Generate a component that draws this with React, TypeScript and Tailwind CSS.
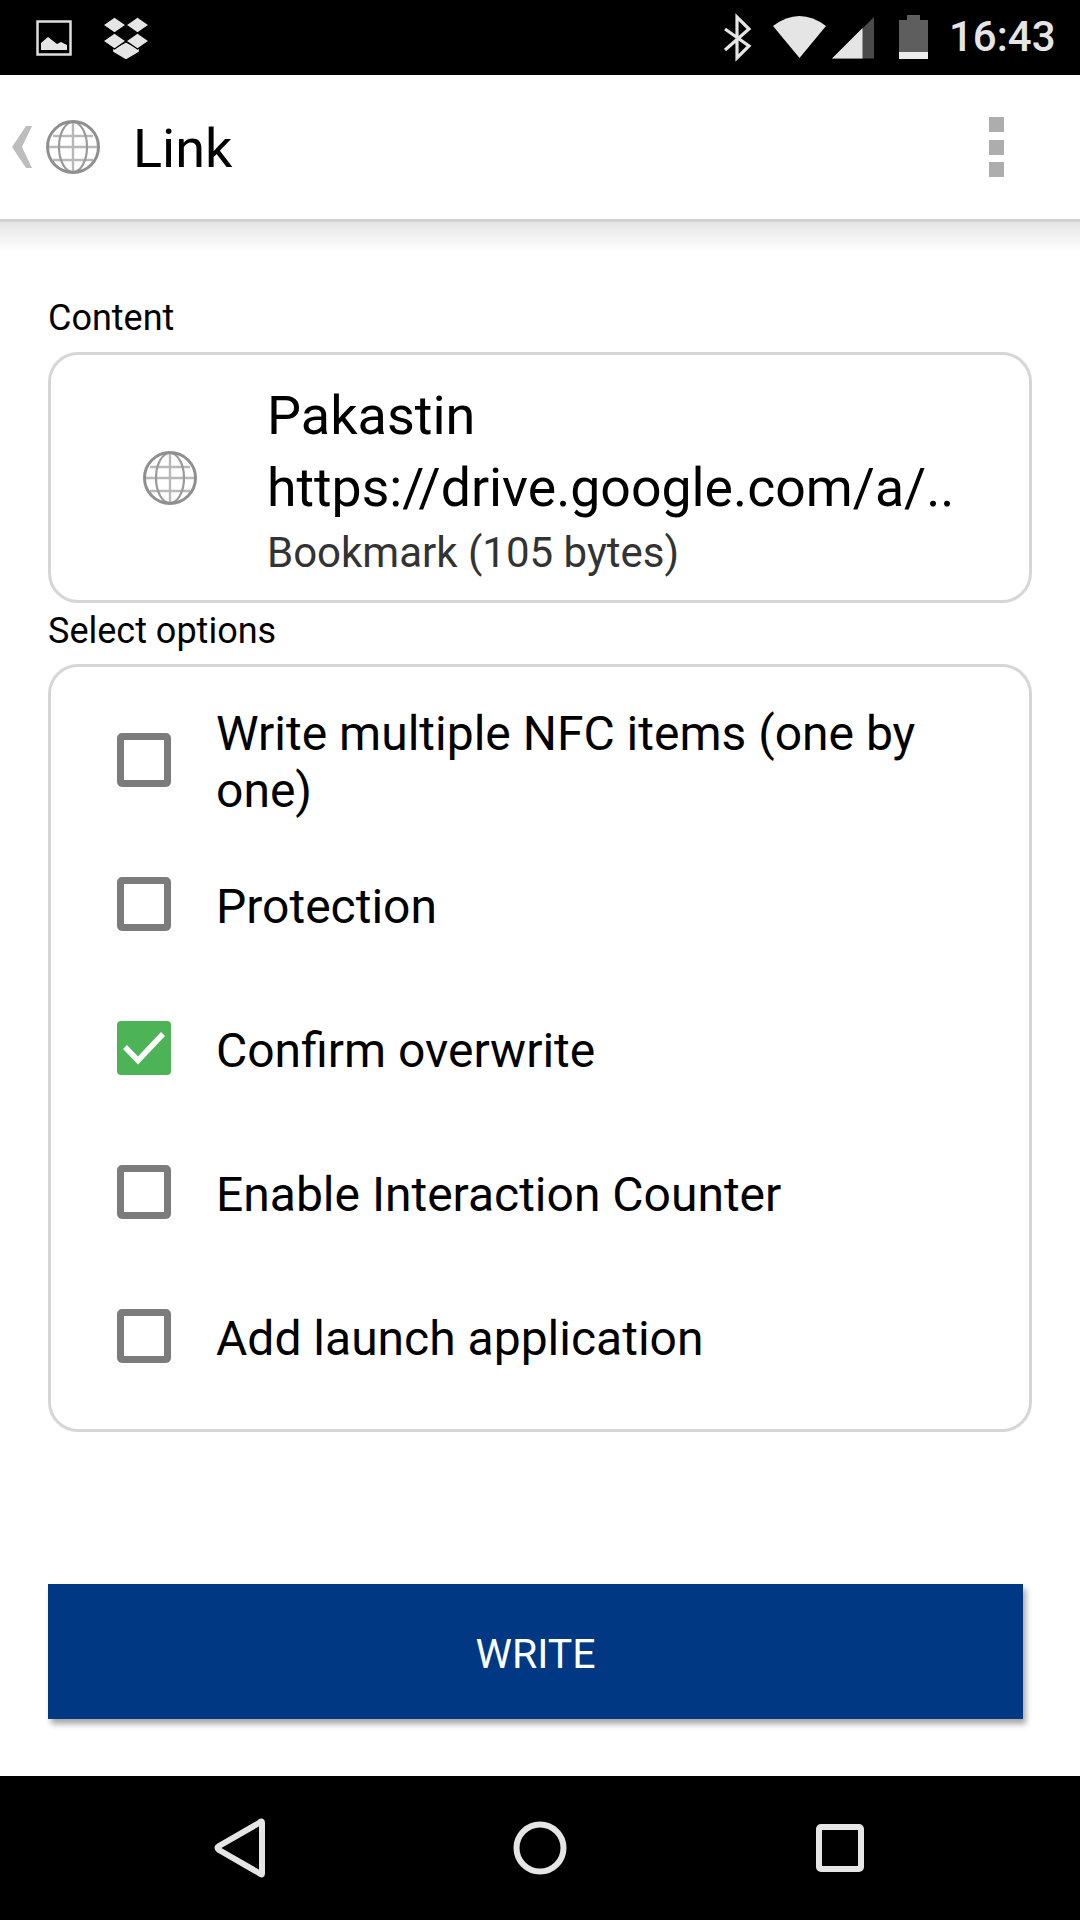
import React from "react";

function Globe({ size }: { size: number }) {
  return (
    <svg width={size} height={size} viewBox="0 0 54 54" fill="none" className="shrink-0">
      <g stroke="#b8b8b8" strokeWidth="2.4">
        <line x1="3" y1="27" x2="51" y2="27" />
        <line x1="27" y1="3" x2="27" y2="51" />
        <path d="M7 16 H47" />
        <path d="M7 40 H47" />
      </g>
      <g stroke="#9a9a9a" strokeWidth="2.2">
        <ellipse cx="27" cy="27" rx="14" ry="25" />
      </g>
      <circle cx="27" cy="27" r="25.500" stroke="#8f8f8f" strokeWidth="3" />
    </svg>
  );
}

function Check({ checked }: { checked?: boolean }) {
  if (checked) {
    return (
      <div className="w-[54px] h-[54px] rounded-[4px] bg-[#4cb457] shrink-0 flex items-center justify-center">
        <svg width="54" height="54" viewBox="0 0 54 54" fill="none">
          <path d="M8 26 L21 39.500 L46 13" stroke="#ffffff" strokeWidth="5.500" />
        </svg>
      </div>
    );
  }
  return <div className="w-[54px] h-[54px] rounded-[5px] border-[7px] border-[#7c7c7c] shrink-0" />;
}

function Option({ label, checked }: { label: React.ReactNode; checked?: boolean }) {
  return (
    <div className="h-[144px] flex items-center pl-[66px] pr-[60px] gap-[45px]">
      <Check checked={checked} />
      <div className="pt-[4px] text-[48px] leading-[57px] text-black">{label}</div>
    </div>
  );
}

export default function App() {
  return (
    <div className="w-[1080px] h-[1920px] flex flex-col bg-white overflow-hidden font-['Roboto',sans-serif]">
      <div className="h-[75px] bg-black flex items-center shrink-0">
        <svg width="1080" height="75" viewBox="0 0 1080 75" className="block">
          <rect x="37.500" y="21.500" width="33" height="33" fill="none" stroke="#dedede" strokeWidth="2.500" />
          <path d="M41 50 V43 L48 37 L57 44 L61 42 L67 45 V50 Z" fill="#e5e5e5" />
          <g stroke="#000000" strokeWidth="1.200" fill="#e5e5e5">
            <path d="M112.500 49 L126 42 L139.500 49 L139.500 52 L126 60 L112.500 52 Z" />
            <path d="M103 25 L114.500 17 L126 25 L114.500 33 Z" />
            <path d="M126 25 L137.500 17 L149 25 L137.500 33 Z" />
            <path d="M103 41 L114.500 33 L126 41 L114.500 49 Z" />
            <path d="M126 41 L137.500 33 L149 41 L137.500 49 Z" />
          </g>
          <path d="M725 29 L749 46 L737 58 V17 L749 29 L725 50" fill="none" stroke="#e5e5e5" strokeWidth="3.200" />
          <path d="M773 26 Q799.500 6 826 26 L799.500 58 Z" fill="#e5e5e5" />
          <path d="M832 58.500 L874 17 V58.500 Z" fill="#4a4a4a" />
          <path d="M832 58.500 L862.500 28 V58.500 Z" fill="#e5e5e5" />
          <path d="M899 20 H907 V15 H920 V20 H928 V52 H899 Z" fill="#5e5e5e" />
          <rect x="899" y="52" width="29" height="7" fill="#ececec" />
        </svg>
        <span className="absolute left-[949px] top-[12px] text-[42px] leading-[50px] font-medium text-[#e5e5e5]">16:43</span>
      </div>

      <div className="h-[144px] shrink-0 flex items-center pl-[12px] pr-[76px]">
        <svg width="21" height="42" viewBox="0 0 21 42" className="shrink-0">
          <path d="M20 0 H14 L0 21 L14 42 H20 L10 21 Z" fill="#bdbdbd" />
        </svg>
        <div className="ml-[13px]">
          <Globe size={54} />
        </div>
        <div className="ml-[33px] pt-[3px] text-[54px] leading-[60px] text-black">Link</div>
        <div className="ml-auto flex flex-col gap-[7.500px]">
          <div className="w-[15px] h-[15px] bg-[#adadad]" />
          <div className="w-[15px] h-[15px] bg-[#adadad]" />
          <div className="w-[15px] h-[15px] bg-[#adadad]" />
        </div>
      </div>

      <div className="flex-1 flex flex-col relative border-t-[3px] border-[#d2d2d2]">
        <div className="h-[30px] shrink-0 bg-gradient-to-b from-[#e6e6e6] to-white" />
        <div className="px-[48px] flex flex-col">
          <div className="mt-[45px] text-[36px] leading-[42px] text-black">Content</div>
          <div className="mt-[13px] h-[251px] border-[3px] border-[#d6d6d6] rounded-[30px] flex items-center pl-[92px] gap-[70px]">
            <Globe size={54} />
            <div className="flex flex-col pt-[2px]">
              <div className="text-[54px] leading-[72px] text-black">Pakastin</div>
              <div className="text-[53.600px] leading-[72px] text-black whitespace-nowrap">https://drive.google.com/a/..</div>
              <div className="mt-[4px] text-[42px] leading-[50px] text-[#333333]">Bookmark (105 bytes)</div>
            </div>
          </div>
          <div className="mt-[3px] text-[36px] leading-[50px] text-black">Select options</div>
          <div className="mt-[8px] h-[768px] border-[3px] border-[#d6d6d6] rounded-[30px] flex flex-col pt-[21px]">
            <Option label="Write multiple NFC items (one by one)" />
            <Option label="Protection" />
            <Option label="Confirm overwrite" checked />
            <Option label="Enable Interaction Counter" />
            <Option label="Add launch application" />
          </div>
          <div className="mt-[152px] w-[975px] h-[135px] pt-[6px] bg-[#003884] shadow-[3px_5px_6px_rgba(0,0,0,0.35)] flex items-center justify-center text-[41px] text-white">
            WRITE
          </div>
        </div>
      </div>

      <div className="h-[144px] bg-black shrink-0 flex items-center justify-center">
        <svg width="1080" height="144" viewBox="0 0 1080 144" fill="none" stroke="#e5e5e5" strokeWidth="6">
          <path d="M262 47 V97 Q262 100 259 97 L219 74 Q216 72 219 70 L259 47 Q262 44 262 47 Z" strokeLinejoin="round" />
          <circle cx="540" cy="72" r="23.500" />
          <rect x="819" y="51" width="42" height="42" rx="2" />
        </svg>
      </div>
    </div>
  );
}
